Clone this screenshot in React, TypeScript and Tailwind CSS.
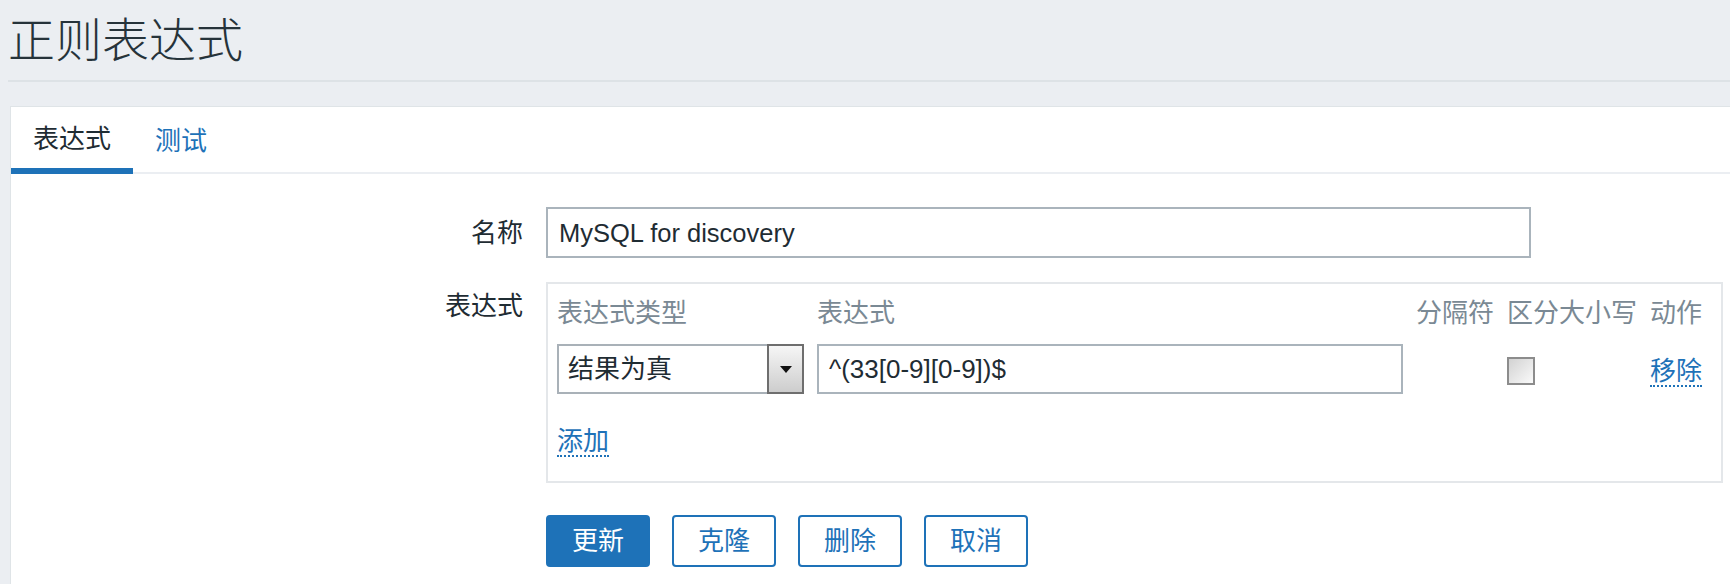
import React from 'react';

const blue = 'text-[#1e72b8]';

function Select() {
  return (
    <div className="flex h-[50px] items-stretch border-2 border-[#a9b1b8] bg-white">
      <span className="flex flex-1 items-center pl-[9px] text-[#1f2c33]">结果为真</span>
      <span className="-my-[2px] -mr-[2px] flex w-[37px] items-center justify-center border-2 border-[#6e6e6e] bg-gradient-to-b from-[#f6f6f6] to-[#cdcdcd]">
        <svg width="12" height="7" viewBox="0 0 12 7">
          <path d="M0 0h12L6 7z" fill="#111" />
        </svg>
      </span>
    </div>
  );
}

function Checkbox() {
  return (
    <div className="mt-[4px] h-[28px] w-[28px] border-2 border-[#8c8c8c] bg-gradient-to-br from-[#d2d2d2] to-[#fafafa]" />
  );
}

function Link({ children }: { children: React.ReactNode }) {
  return (
    <span className={`inline-block border-b-2 border-dotted border-[#1e72b8] leading-[28px] ${blue}`}>
      {children}
    </span>
  );
}

export default function App() {
  return (
    <div className="min-h-screen bg-[#ebeef2] font-['Liberation_Sans','Noto_Sans_CJK_SC',sans-serif] text-[#1f2c33]">
      <header className="ml-[8px] flex h-[82px] items-center border-b-2 border-[#dde2e6]">
        <h1 className="text-[47px] font-light leading-none text-[#26333a]">正则表达式</h1>
      </header>

      <div className="ml-[10px] mt-[24px] border-l border-t border-[#dfe4e7] bg-white pb-[40px]">
        <nav className="flex h-[67px] border-b-2 border-[#ebeef2] text-[26px] leading-[30px]">
          <div className="-mb-[2px] flex items-center border-b-[6px] border-[#1e72b8] px-[22px] pt-[2px]">表达式</div>
          <div className={`flex items-center px-[22px] pt-[2px] ${blue}`}>测试</div>
        </nav>

        <div className="grid grid-cols-[512px_auto] gap-x-[23px] gap-y-[24px] pt-[33px] text-[26px] leading-[30px]">
          <label className="flex items-center justify-end">名称</label>
          <div className="flex h-[51px] w-[985px] items-center border-2 border-[#aab4bc] px-[11px] text-[25.5px]">
            MySQL for discovery
          </div>

          <label className="justify-self-end pt-[9px]">表达式</label>
          <div className="w-[1177px] border-2 border-[#e4e7ea] pb-[24px] pl-[9px] pt-[14px]">
            <div className="grid grid-cols-[247px_586px_78px_130px_52px] items-center gap-x-[13px] gap-y-[16px]">
              <div className="text-[#7a8994]">表达式类型</div>
              <div className="text-[#7a8994]">表达式</div>
              <div className="text-[#7a8994]">分隔符</div>
              <div className="whitespace-nowrap text-[#7a8994]">区分大小写</div>
              <div className="text-[#7a8994]">动作</div>

              <Select />
              <div className="flex h-[50px] items-center border-2 border-[#aab4bc] px-[10px]">^(33[0-9][0-9])$</div>
              <div />
              <Checkbox />
              <div className="pt-[4px]">
                <Link>移除</Link>
              </div>
            </div>
            <div className="mt-[32px]">
              <Link>添加</Link>
            </div>
          </div>

          <div />
          <div className="mt-[8px] flex gap-[22px]">
            <button className="h-[52px] w-[104px] rounded-[4px] border-2 border-[#1e72b8] bg-[#1e72b8] text-white">更新</button>
            <button className={`h-[52px] w-[104px] rounded-[4px] border-2 border-[#1e72b8] bg-white ${blue}`}>克隆</button>
            <button className={`h-[52px] w-[104px] rounded-[4px] border-2 border-[#1e72b8] bg-white ${blue}`}>删除</button>
            <button className={`h-[52px] w-[104px] rounded-[4px] border-2 border-[#1e72b8] bg-white ${blue}`}>取消</button>
          </div>
        </div>
      </div>
    </div>
  );
}
